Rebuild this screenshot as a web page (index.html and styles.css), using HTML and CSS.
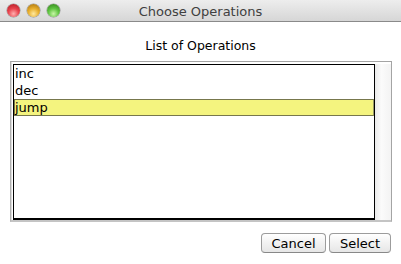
FILE: index.html
```html
<!DOCTYPE html>
<html>
<head>
    <title>Choose Operations</title>
    <link rel="stylesheet" href="styles.css">
</head>
<body>
    <div class="window">
        <div class="titlebar">
            <div class="lights">
                <span class="light red"></span>
                <span class="light yellow"></span>
                <span class="light green"></span>
            </div>
            <div class="title">Choose Operations</div>
            <div></div>
        </div>

        <div class="content">
            <div class="caption">List of Operations</div>

            <div class="frame">
                <div class="list">
                    <div class="item">inc</div>
                    <div class="item">dec</div>
                    <div class="item selected">jump</div>
                </div>
                <div class="track"></div>
            </div>

            <div class="buttons">
                <button class="btn">Cancel</button>
                <button class="btn select">Select</button>
            </div>
        </div>
    </div>
</body>
</html>
```

FILE: styles.css
```css
body {
    margin: 0;
    padding: 0;
    background-color: #fff;
    font-family: "DejaVu Sans", sans-serif;
    color: #000;
}
.window {
    width: 401px;
    height: 264px;
    display: flex;
    flex-direction: column;
}
.titlebar {
    height: 21px;
    border-bottom: 1px solid #8a8a8a;
    background: linear-gradient(#ededed, #d6d6d6);
    display: grid;
    grid-template-columns: 1fr auto 1fr;
    align-items: center;
}
.lights {
    display: flex;
    gap: 7px;
    padding-left: 7px;
}
.light {
    width: 13px;
    height: 13px;
    border-radius: 50%;
    box-shadow: 0 0 0 0.5px rgba(0, 0, 0, 0.35);
}
.red {
    background: radial-gradient(circle at 50% 75%, #ffb0b0 0, #e8434d 45%, #a9151e 100%);
}
.yellow {
    background: radial-gradient(circle at 50% 75%, #ffe9a0 0, #e7ae2b 45%, #a06a0a 100%);
}
.green {
    background: radial-gradient(circle at 50% 75%, #c9f7a8 0, #5fc441 45%, #2b7a14 100%);
}
.title {
    font-size: 13px;
    color: #404040;
    padding-top: 1px;
}
.content {
    flex: 1;
    display: flex;
    flex-direction: column;
}
.caption {
    font-size: 12.5px;
    text-align: center;
    margin-top: 16px;
    height: 23px;
}
.frame {
    margin: 0 9px 0 10px;
    height: 156px;
    border: 1px solid #a4a4a4;
    border-bottom: 2px solid #c4c4c4;
    border-left: 1px solid #b0b0b0;
    box-shadow: inset 1px 0 0 #dcdcdc;
    padding: 2px 0 0 2px;
    display: flex;
}
.list {
    flex: 1;
    border: 1px solid #000;
    border-bottom-width: 2px;
    background-color: #fff;
}
.item {
    height: 17px;
    line-height: 17px;
    font-size: 13px;
    padding-left: 1px;
}
.item.selected {
    height: 15px;
    line-height: 15px;
    background-color: #f4f47f;
    border: 1px solid #77774c;
    border-right-color: #9a9a6a;
    padding-left: 0;
}
.track {
    width: 16px;
    background: linear-gradient(to right, #eaeaea, #fbfbfb 40%, #f3f3f3);
}
.buttons {
    display: flex;
    justify-content: flex-end;
    gap: 3px;
    margin-top: 11px;
    padding-right: 10px;
}
.btn {
    height: 20px;
    width: 65px;
    padding: 0;
    font-family: "DejaVu Sans", sans-serif;
    font-size: 13px;
    color: #000;
    background: linear-gradient(#ffffff, #f2f2f2 50%, #e6e6e6);
    border: 1px solid #9c9c9c;
    border-bottom-color: #888;
    border-radius: 4px;
}
.btn.select {
    width: 62px;
}
```
